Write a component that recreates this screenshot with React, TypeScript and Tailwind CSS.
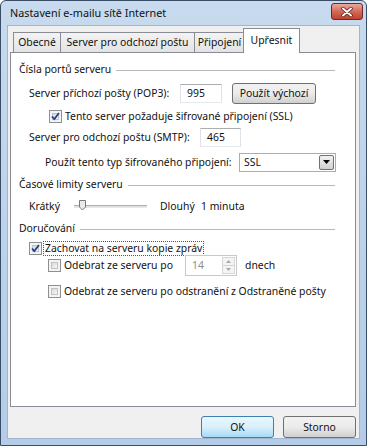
import React from "react";

function Checkbox({ checked }: { checked?: boolean }) {
  return (
    <div className="relative w-[13px] h-[13px] shrink-0 border border-[#8e8f8f] bg-[#f4f4f4] p-[2px]">
      <div className="w-full h-full border border-[#bfc3c8] bg-gradient-to-br from-[#d8d8d8] to-[#f8f8f8]" />
      {checked && (
        <svg className="absolute left-0 top-0" width="11" height="11" viewBox="0 0 11 11">
          <path d="M2 5.5 L4.3 8 L9 2" fill="none" stroke="#22408f" strokeWidth="1.8" />
        </svg>
      )}
    </div>
  );
}

function GroupHeader({ title }: { title: string }) {
  return (
    <div className="flex items-center h-[16px] ml-[8px]">
      <span>{title}</span>
      <div className="flex-1 h-px bg-[#b9b9b9] ml-[5px] mt-[2px]" />
    </div>
  );
}

function TextBox({ value, className }: { value: string; className: string }) {
  return (
    <div
      className={
        "flex items-center shrink-0 pl-[6px] bg-white border border-[#abadb3] border-l-[#e2e3ea] border-r-[#e2e3ea] border-b-[#e3e9ef] " +
        className
      }
    >
      {value}
    </div>
  );
}

function Button({ label, def, className }: { label: string; def?: boolean; className: string }) {
  return (
    <div
      className={
        "flex items-center justify-center shrink-0 rounded-[3px] border " +
        (def
          ? "border-[#3c7fb1] bg-gradient-to-b from-[#eaf6fd] via-[#d9f0fc] to-[#a7d9f5] "
          : "border-[#707070] bg-gradient-to-b from-[#f2f2f2] via-[#ebebeb] to-[#d0d0d0] ") +
        className
      }
    >
      {label}
    </div>
  );
}

export default function App() {
  return (
    <div className="w-[367px] h-[446px] flex flex-col rounded-t-[6px] border border-[#3a4d66] bg-gradient-to-b from-[#c7daee] to-[#b4cce8] text-[10.4px] text-[#111] font-['Noto_Sans',sans-serif] leading-none whitespace-nowrap overflow-hidden">
      {/* title bar */}
      <div className="h-[24px] flex items-center justify-between pl-[9px] pr-[3px]">
        <span className="text-[10.8px]">Nastavení e-mailu sítě Internet</span>
        <div className="w-[32px] h-[17px] mt-[-3px] rounded-[3px] border border-[#6d2a22] bg-gradient-to-b from-[#e8a99b] via-[#d36a5a] to-[#c1402f] flex items-center justify-center">
          <svg width="12" height="10" viewBox="0 0 12 10">
            <path d="M2 1.5 L10 8.5 M10 1.5 L2 8.5" stroke="#4a1a14" strokeWidth="3.4" strokeLinecap="round" />
            <path d="M2 1.5 L10 8.5 M10 1.5 L2 8.5" stroke="#ffffff" strokeWidth="2" strokeLinecap="round" />
          </svg>
        </div>
      </div>

      {/* client area */}
      <div className="flex-1 mx-[6px] mb-[6px] bg-[#f0f0f0] border border-[#a3b5cc] flex flex-col pl-[2px] pr-[3px]">
        {/* tabs */}
        <div className="flex items-end h-[26px] pl-[3px] relative z-10">
          <div className="w-[48px] h-[20px] border border-[#898c95] border-b-0 bg-gradient-to-b from-[#f3f3f3] to-[#e3e3e3] flex items-center justify-center">Obecné</div>
          <div className="w-[134px] h-[20px] border border-l-0 border-[#898c95] border-b-0 bg-gradient-to-b from-[#f3f3f3] to-[#e3e3e3] flex items-center justify-center">Server pro odchozí poštu</div>
          <div className="w-[50px] h-[20px] border border-l-0 border-[#898c95] border-b-0 bg-gradient-to-b from-[#f3f3f3] to-[#e3e3e3] flex items-center justify-center">Připojení</div>
          <div className="w-[57px] h-[25px] -ml-[2px] mb-[-1px] border border-[#898c95] border-b-0 bg-white flex items-start pt-[6px] justify-center">Upřesnit</div>
        </div>

        {/* panel */}
        <div className="h-[355px] bg-white border border-[#898c95] flex flex-col pr-[20px]">
          <div className="mt-[8px]">
            <GroupHeader title="Čísla portů serveru" />
          </div>
          <div className="mt-[6px] h-[20px] flex items-center pl-[18px]">
            <span className="w-[151px] shrink-0">Server příchozí pošty (POP3):</span>
            <TextBox value="995" className="w-[42px] h-[19px]" />
            <Button label="Použít výchozí" className="ml-[10px] w-[84px] h-[21px]" />
          </div>
          <div className="mt-[6px] h-[15px] flex items-center pl-[38px]">
            <Checkbox checked />
            <span className="ml-[3px]">Tento server požaduje šifrované připojení (SSL)</span>
          </div>
          <div className="mt-[4px] h-[19px] flex items-center pl-[18px]">
            <span className="w-[171px] shrink-0">Server pro odchozí poštu (SMTP):</span>
            <TextBox value="465" className="w-[41px] h-[19px]" />
          </div>
          <div className="mt-[5px] h-[20px] flex items-center pl-[34px]">
            <span className="w-[194px] shrink-0">Použít tento typ šifrovaného připojení:</span>
            <div className="w-[97px] h-[19px] shrink-0 bg-white border border-[#abadb3] flex items-center justify-between pl-[4px] pr-[1px]">
              <span>SSL</span>
              <div className="w-[15px] h-[15px] rounded-[2px] border border-[#707070] bg-gradient-to-b from-[#f2f2f2] to-[#d0d0d0] flex items-center justify-center">
                <svg width="7" height="4" viewBox="0 0 7 4">
                  <path d="M0 0 H7 L3.5 4 Z" fill="#000" />
                </svg>
              </div>
            </div>
          </div>
          <div className="mt-[4px]">
            <GroupHeader title="Časové limity serveru" />
          </div>
          <div className="mt-[6px] h-[16px] flex items-center pl-[18px]">
            <span className="w-[45px] shrink-0">Krátký</span>
            <div className="relative w-[73px] h-[10px] shrink-0 flex items-center">
              <div className="w-full h-[3px] border-t border-[#b0b0b0] border-b border-b-[#e6e6e6] bg-[#e0e0e0]" />
              <svg className="absolute left-[5px] top-[-1px]" width="7" height="11" viewBox="0 0 7 11">
                <path d="M0.5 0.5 H6.5 V7 L3.5 10 L0.5 7 Z" fill="#eaeaea" stroke="#7a7a7a" />
              </svg>
            </div>
            <span className="ml-[13px] w-[41px] shrink-0">Dlouhý</span>
            <span>1 minuta</span>
          </div>
          <div className="mt-[6px]">
            <GroupHeader title="Doručování" />
          </div>
          <div className="mt-[6px] h-[13px] flex items-center pl-[18px]">
            <Checkbox checked />
            <span className="ml-[2px] px-[1px] py-[1px] outline outline-1 outline-dotted outline-[#555]">Zachovat na serveru kopie zpráv</span>
          </div>
          <div className="h-[21px] flex items-center pl-[37px]">
            <Checkbox />
            <span className="ml-[3px] w-[121px] shrink-0">Odebrat ze serveru po</span>
            <div className="w-[52px] h-[21px] shrink-0 bg-white border border-[#c9c9c9] flex items-center justify-between pl-[6px] pr-[1px] text-[#8d8d8d]">
              <span>14</span>
              <div className="flex flex-col h-[17px] w-[13px]">
                <div className="flex-1 border border-[#d5d5d5] bg-[#f4f4f4] flex items-center justify-center">
                  <svg width="5" height="3" viewBox="0 0 5 3"><path d="M0 3 H5 L2.5 0 Z" fill="#a9a9a9" /></svg>
                </div>
                <div className="flex-1 border border-t-0 border-[#d5d5d5] bg-[#f4f4f4] flex items-center justify-center">
                  <svg width="5" height="3" viewBox="0 0 5 3"><path d="M0 0 H5 L2.5 3 Z" fill="#a9a9a9" /></svg>
                </div>
              </div>
            </div>
            <span className="ml-[8px]">dnech</span>
          </div>
          <div className="mt-[7px] h-[16px] flex items-center pl-[37px]">
            <Checkbox />
            <span className="ml-[3px]">Odebrat ze serveru po odstranění z Odstraněné pošty</span>
          </div>
        </div>

        {/* buttons */}
        <div className="flex justify-end gap-[9px] mt-[9px]">
          <Button label="OK" def className="w-[73px] h-[22px]" />
          <Button label="Storno" className="w-[73px] h-[22px]" />
        </div>
      </div>
    </div>
  );
}
